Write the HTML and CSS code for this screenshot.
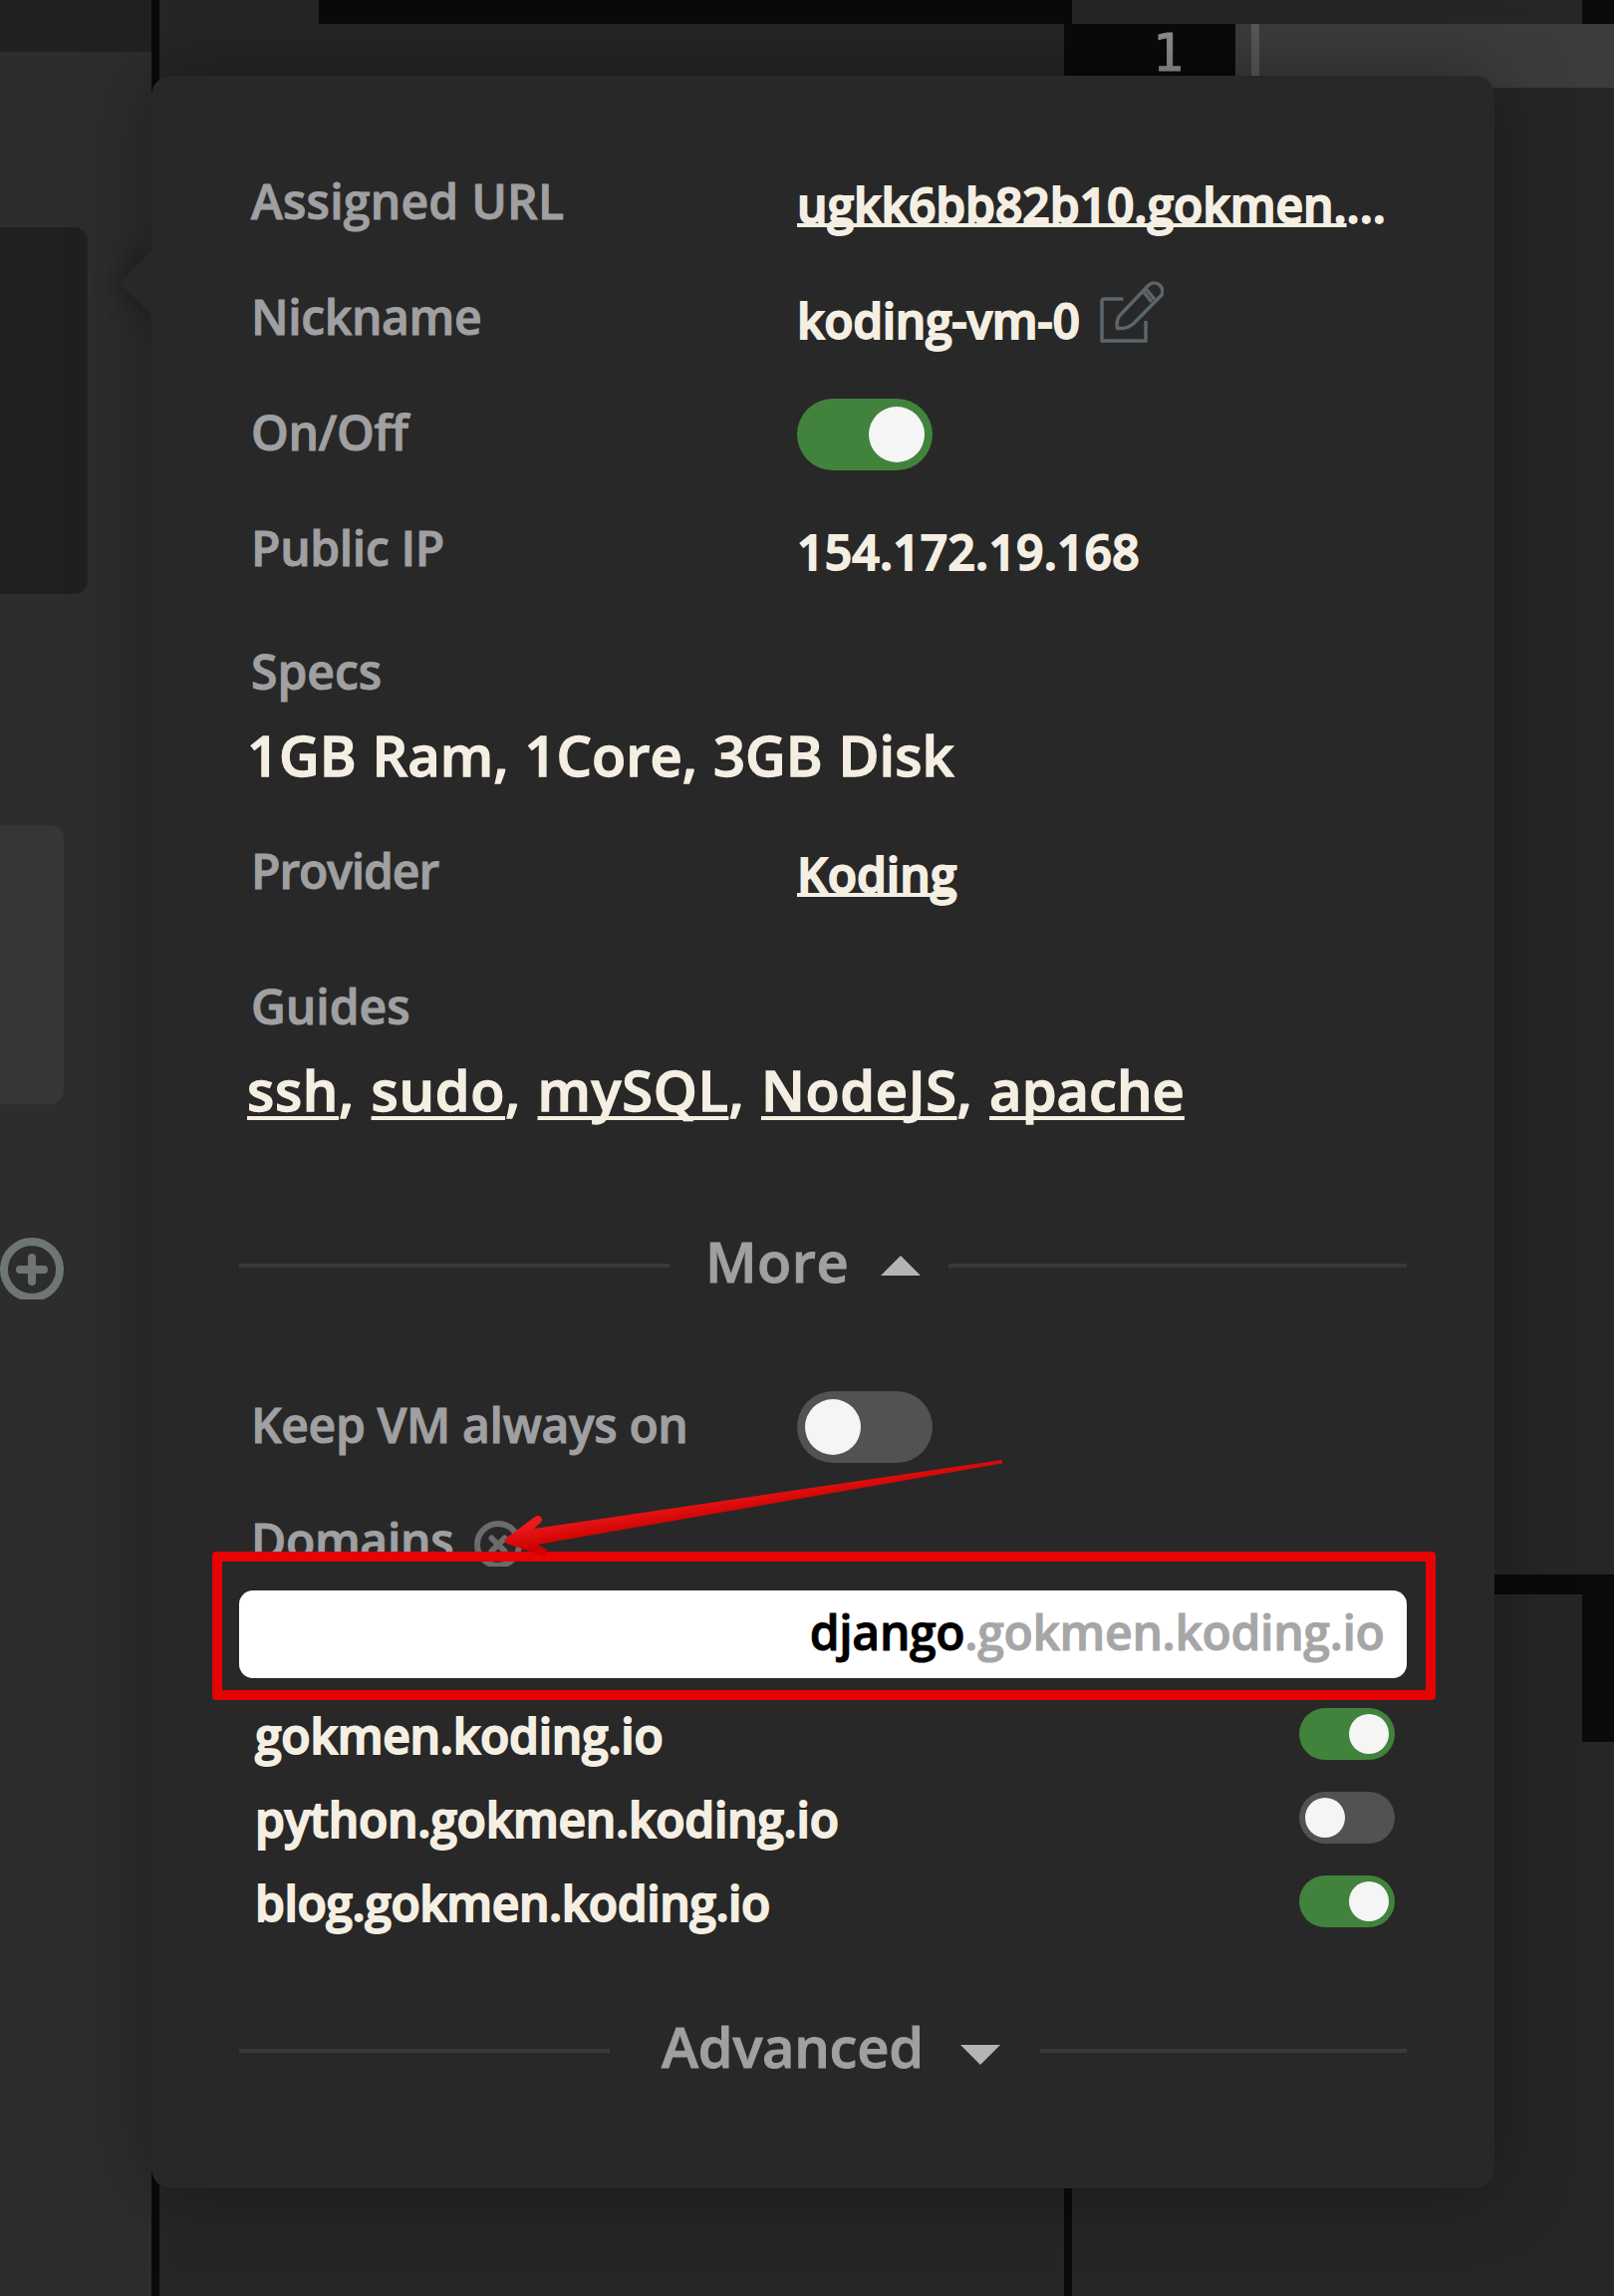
FILE: index.html
```html
<!DOCTYPE html>
<html lang="en">
<head>
<meta charset="utf-8">
<title>VM settings</title>
<link rel="stylesheet" href="styles.css">
</head>
<body>
<div class="workspace">
  <aside class="sidebar">
    <div class="sidebar-top"></div>
    <div class="card card-active"></div>
    <div class="card card-idle"></div>
    <svg class="add" width="64" height="62" viewBox="0 0 64 62"><circle cx="32" cy="32" r="28"/><path d="M20 32H44M32 20V44"/></svg>
  </aside>
  <section class="files"><div class="files-bar"></div></section>
  <section class="editor">
    <div class="tabs"></div>
    <div class="code">
      <div class="gutter">1</div>
      <div class="line"></div>
    </div>
    <div class="console"><div class="console-edge"></div></div>
  </section>
</div>

<div class="panel">
  <svg class="pointer" width="36" height="68" viewBox="0 0 36 68"><path d="M36 0V68L34 67L0 34L34 1Z"/></svg>
  <div class="row url"><span class="label">Assigned URL</span><span class="value"><a>ugkk6bb82b10.gokmen.</a><span>...</span></span></div>
  <div class="row nickname"><span class="label">Nickname</span><span class="value"><span>koding-vm-0</span><svg class="edit" width="64" height="64" viewBox="1104 281 64 64"><path d="M1127.500 300H1108Q1106 300 1106 302V342H1150V322"/><path d="M1121.500 329.500C1120.500 324 1122 318.500 1125 315.500L1152.500 286.500C1159 280 1170 287 1166 296L1138 324.500C1133 329 1127 330 1121.500 329.500Z"/><path d="M1147 292L1156 303M1150 289.500L1159 300.500"/></svg></span></div>
  <div class="row power"><span class="label">On/Off</span><span class="value"><i class="toggle on"></i></span></div>
  <div class="row ip"><span class="label">Public IP</span><span class="value">154.172.19.168</span></div>
  <div class="stack specs"><span class="label">Specs</span><span class="big">1GB Ram, 1Core, 3GB Disk</span></div>
  <div class="row provider"><span class="label">Provider</span><span class="value"><a>Koding</a></span></div>
  <div class="stack guides"><span class="label">Guides</span><span class="big"><a>ssh</a>, <a>sudo</a>, <a>mySQL</a>, <a>NodeJS</a>, <a class="last">apache</a></span></div>
  <div class="divider more"><hr class="rule left"><span class="heading">More</span><i class="tri up"></i><hr class="rule right"></div>
  <div class="row keep"><span class="label">Keep VM always on</span><span class="value"><i class="toggle"></i></span></div>
  <div class="row domains"><span class="label"><span class="domains-text">Domains</span><svg class="close" width="48" height="46" viewBox="0 0 48 46"><circle cx="24" cy="24" r="21"/><path d="M17.500 17.500L30.500 30.500M30.500 17.500L17.500 30.500"/></svg></span></div>
  <div class="field"><span>django</span><span class="suffix">.gokmen.koding.io</span></div>
  <ul class="list">
    <li><span>gokmen.koding.io</span><i class="toggle small on"></i></li>
    <li><span>python.gokmen.koding.io</span><i class="toggle small"></i></li>
    <li class="blog"><span>blog.gokmen.koding.io</span><i class="toggle small on"></i></li>
  </ul>
  <div class="divider advanced"><hr class="rule left"><span class="heading">Advanced</span><i class="tri down"></i><hr class="rule right"></div>
</div>

<div class="highlight"></div>
<svg class="arrow" width="520" height="110" viewBox="496 1460 520 110">
  <defs><linearGradient id="red" gradientUnits="userSpaceOnUse" x1="700" y1="1502" x2="704" y2="1526"><stop offset="0" stop-color="#ee1a1a"/><stop offset="1" stop-color="#cc0000"/></linearGradient></defs>
  <path fill="url(#red)" d="M1006 1465L536 1534L543 1527.500C546 1523 541 1519 537 1522L508 1543.500Q504 1547 509 1549L544 1561C550 1561.500 551 1555 547 1553.500L539 1550L1006 1468.500Z"/>
</svg>
</body>
</html>
```
FILE: styles.css
```css
* { box-sizing: border-box; }
body {
  margin: 0;
  position: relative;
  width: 1620px;
  height: 2304px;
  overflow: hidden;
  background: #262626;
  font-family: "Open Sans", "Noto Sans", sans-serif;
  font-weight: 600;
}

/* Workspace behind the popover */
.workspace { display: flex; height: 2304px; }
.sidebar { width: 160px; border-right: 8px solid #0a0a0a; background: #2d2d2d; }
.sidebar-top { height: 52px; background: #212121; }
.card { border-radius: 0 14px 14px 0; }
.card-active { width: 88px; height: 368px; margin-top: 176px; background: #202020; }
.card-idle { width: 64px; height: 280px; margin-top: 232px; background: #363636; }
.add { display: block; margin-top: 134px; fill: none; stroke: #6e7675; stroke-width: 8; stroke-linecap: round; }
.files { width: 908px; padding-left: 160px; }
.files-bar { height: 24px; background: #0a0a0a; }
.editor { flex: 1; display: flex; flex-direction: column; border-left: 8px solid #0a0a0a; }
.tabs { height: 24px; border-right: 32px solid #0a0a0a; }
.code { display: flex; height: 1556px; }
.gutter {
  width: 164px;
  height: 64px;
  padding-right: 52px;
  background: #0a0a0a;
  color: #8f8f8f;
  font: 52px/58px "DejaVu Sans Mono", monospace;
  -webkit-text-stroke: 1px #8f8f8f;
  text-align: right;
}
.line { flex: 1; height: 64px; padding-left: 16px; background: #3c3c3c; }
.line::before { content: ""; display: block; width: 8px; height: 64px; background: #585856; }
.console { border-top: 20px solid #0a0a0a; }
.console-edge { height: 148px; border-right: 32px solid #0a0a0a; }

/* Popover */
.panel {
  position: absolute;
  left: 152px;
  top: 76px;
  width: 1348px;
  height: 2120px;
  padding: 68px 88px 98px;
  border-radius: 20px;
  background: #282828;
  box-shadow: 0 0 80px rgba(0, 0, 0, .36);
  font-size: 48px;
  -webkit-text-stroke: 1px currentColor;
}
.pointer {
  position: absolute;
  left: -33px;
  top: 174px;
  fill: #282828;
  overflow: visible;
  filter: drop-shadow(0 0 14px rgba(0, 0, 0, .42));
  clip-path: inset(-50px 3px -50px -50px);
}
.row { display: flex; height: 116px; padding-left: 12px; line-height: 116px; }
.label { color: #a0a0a2; }
.row .label { width: 548px; white-space: nowrap; }
.value {
  display: flex;
  padding-top: 4px;
  color: #f5efe3;
  white-space: nowrap;
  -webkit-text-stroke: 1.8px currentColor;
}
a {
  text-decoration: underline;
  text-decoration-thickness: 4px;
  text-decoration-skip-ink: none;
  text-underline-offset: 0;
}
.url .label { letter-spacing: .25px; }
.url .value { letter-spacing: -.05px; }
.nickname .label { letter-spacing: -.35px; }
.nickname .value { letter-spacing: -.3px; }
.power .label, .ip .label { letter-spacing: -.35px; }
.ip .value { letter-spacing: .18px; }
.edit { margin: 17px 0 0 20px; fill: none; stroke: #5b656c; stroke-width: 3.500; stroke-linejoin: round; }
.toggle {
  display: flex;
  width: 136px;
  height: 72px;
  margin-top: 20px;
  padding: 8px;
  border-radius: 36px;
  background: #525252;
}
.toggle::before { content: ""; width: 56px; height: 56px; border-radius: 50%; background: #f5f5f5; }
.toggle.on { justify-content: flex-end; background: #41833c; }
.toggle.small { width: 96px; height: 52px; margin: 14px 12px 0 0; padding: 6px; }
.toggle.small::before { width: 40px; height: 40px; }
.stack { display: flex; flex-direction: column; }
.stack .label { padding-left: 12px; line-height: 81px; }
.big {
  height: 88px;
  padding-left: 8px;
  color: #f5efe3;
  font-size: 56px;
  line-height: 86px;
  white-space: nowrap;
  -webkit-text-stroke: 1.3px currentColor;
}
.big a { text-underline-offset: 5px; }
.specs { margin-top: 25px; }
.specs .big { letter-spacing: .05px; word-spacing: 1.2px; }
.provider { margin-top: 14px; }
.provider .label { letter-spacing: -1.1px; }
.guides { margin-top: 37px; }
.guides .big { letter-spacing: .65px; word-spacing: 1.4px; }
.guides .last { letter-spacing: .05px; }
.divider { display: flex; height: 88px; line-height: 86px; font-size: 56px; color: #a0a0a2; }
.more { margin-top: 84px; }
.advanced { margin-top: 58px; }
.rule { height: 4px; margin: 46px 0 0; border: 0; background: #393939; }
.rule.left { width: 432px; margin-right: 36px; }
.advanced .rule.left { width: 372px; margin-right: 52px; }
.heading { width: 176px; letter-spacing: .5px; }
.advanced .heading { width: 300px; letter-spacing: -.25px; }
.tri { width: 40px; height: 20px; background: #b4b4b4; }
.up { margin: 38px 28px 0 0; clip-path: polygon(50% 0, 100% 100%, 0 100%); }
.down { margin: 42px 40px 0 0; clip-path: polygon(0 0, 100% 0, 50% 100%); }
.rule.right { flex: 1; }
.keep { margin-top: 62px; letter-spacing: -.35px; }
.domains { height: 108px; letter-spacing: -.3px; }
.domains .label { display: flex; }
.domains-text { width: 204px; }
.close { margin: 38px 0 0 20px; fill: none; stroke: #6b6b6b; stroke-width: 6; stroke-linecap: round; }
.field {
  display: flex;
  justify-content: flex-end;
  height: 88px;
  padding-right: 22.5px;
  border-radius: 14px;
  background: #fff;
  color: #000;
  line-height: 84px;
  letter-spacing: -.32px;
}
.suffix { color: #a6a6a6; }
.list {
  margin: 16px 0 0;
  padding: 0;
  list-style: none;
  color: #f5efe3;
  letter-spacing: -.25px;
  -webkit-text-stroke: 1.8px currentColor;
}
.list li { display: flex; justify-content: space-between; height: 84px; padding-left: 16px; line-height: 84px; }
.list .blog { letter-spacing: -.42px; }

/* Annotation */
.highlight {
  position: absolute;
  left: 213px;
  top: 1557px;
  width: 1228px;
  height: 149px;
  border: 10px solid #e60303;
  border-radius: 4px;
}
.arrow { position: absolute; left: 496px; top: 1460px; }
```
